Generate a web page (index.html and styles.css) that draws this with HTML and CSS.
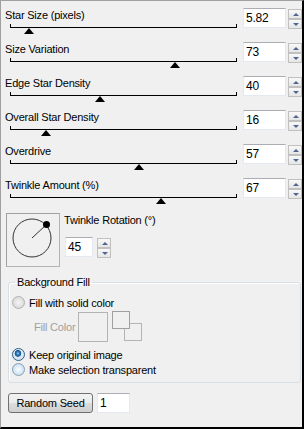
FILE: index.html
```html
<!DOCTYPE html>
<html lang="en">
<head>
    <meta charset="UTF-8">
    <title>Star Effect</title>
    <link rel="stylesheet" href="styles.css">
</head>
<body>
<div class="panel">
    <div class="slider-row">
        <div class="slider-col">
            <div class="slider-label">Star Size (pixels)</div>
            <div class="track"><span class="thumb" style="left: 13px"></span></div>
        </div>
        <div class="spin">
            <div class="spin-input">5.82</div>
            <div class="spin-buttons"><span class="spin-btn up"></span><span class="spin-btn down"></span></div>
        </div>
    </div>
    <div class="slider-row">
        <div class="slider-col">
            <div class="slider-label">Size Variation</div>
            <div class="track"><span class="thumb" style="left: 159px"></span></div>
        </div>
        <div class="spin">
            <div class="spin-input">73</div>
            <div class="spin-buttons"><span class="spin-btn up"></span><span class="spin-btn down"></span></div>
        </div>
    </div>
    <div class="slider-row">
        <div class="slider-col">
            <div class="slider-label">Edge Star Density</div>
            <div class="track"><span class="thumb" style="left: 84px"></span></div>
        </div>
        <div class="spin">
            <div class="spin-input">40</div>
            <div class="spin-buttons"><span class="spin-btn up"></span><span class="spin-btn down"></span></div>
        </div>
    </div>
    <div class="slider-row">
        <div class="slider-col">
            <div class="slider-label">Overall Star Density</div>
            <div class="track"><span class="thumb" style="left: 30px"></span></div>
        </div>
        <div class="spin">
            <div class="spin-input">16</div>
            <div class="spin-buttons"><span class="spin-btn up"></span><span class="spin-btn down"></span></div>
        </div>
    </div>
    <div class="slider-row">
        <div class="slider-col">
            <div class="slider-label">Overdrive</div>
            <div class="track"><span class="thumb" style="left: 123px"></span></div>
        </div>
        <div class="spin">
            <div class="spin-input">57</div>
            <div class="spin-buttons"><span class="spin-btn up"></span><span class="spin-btn down"></span></div>
        </div>
    </div>
    <div class="slider-row">
        <div class="slider-col">
            <div class="slider-label">Twinkle Amount (%)</div>
            <div class="track"><span class="thumb" style="left: 145px"></span></div>
        </div>
        <div class="spin">
            <div class="spin-input">67</div>
            <div class="spin-buttons"><span class="spin-btn up"></span><span class="spin-btn down"></span></div>
        </div>
    </div>

    <div class="dial-row">
        <div class="dial">
            <svg width="52" height="52" viewBox="0 0 52 52">
                <circle cx="25" cy="24" r="19" fill="none" stroke="#333" stroke-width="1"/>
                <line x1="25" y1="24" x2="39" y2="11" stroke="#333" stroke-width="1"/>
                <circle cx="39.5" cy="10.5" r="3.5" fill="#000"/>
            </svg>
        </div>
        <div class="dial-side">
            <div class="dial-label">Twinkle Rotation (°)</div>
            <div class="spin small">
                <div class="spin-input">45</div>
                <div class="spin-buttons"><span class="spin-btn up"></span><span class="spin-btn down"></span></div>
            </div>
        </div>
    </div>

    <fieldset class="group">
        <legend>Background Fill</legend>
        <div class="radio-row">
            <span class="radio disabled"></span>
            <span>Fill with solid color</span>
        </div>
        <div class="fill-row">
            <span class="fill-label">Fill Color</span>
            <span class="swatch"></span>
            <span class="swatch-pair">
                <span class="swatch-small"></span>
                <span class="swatch-small back"></span>
            </span>
        </div>
        <div class="radio-row">
            <span class="radio checked"></span>
            <span>Keep original image</span>
        </div>
        <div class="radio-row">
            <span class="radio"></span>
            <span>Make selection transparent</span>
        </div>
    </fieldset>

    <div class="seed-row">
        <button class="btn">Random Seed</button>
        <div class="seed-input">1</div>
    </div>
</div>
</body>
</html>
```

FILE: styles.css
```css
* {
    box-sizing: border-box;
}
body {
    margin: 0;
    font-family: "Liberation Sans", Arial, sans-serif;
    font-size: 11px;
    letter-spacing: -0.2px;
    color: #000;
    background-color: #f0f0f0;
}
.panel {
    width: 304px;
    height: 429px;
    background-color: #f0f0f0;
    border-top: 1px solid #a0a0a0;
    border-left: 1px solid #a0a0a0;
    border-right: 2px solid #000;
    border-bottom: 2px solid #000;
    padding: 7px 0 0 4px;
}
.slider-row {
    display: flex;
    height: 34px;
}
.slider-col {
    flex: 1;
}
.slider-label {
    line-height: 13px;
    margin-top: 1px;
}
.track {
    position: relative;
    margin: 2px 0 0 5px;
    width: 227px;
    height: 4px;
    border: 1px solid #000;
    border-top: none;
}
.thumb {
    position: absolute;
    top: 4px;
    width: 0;
    height: 0;
    border-left: 5px solid transparent;
    border-right: 5px solid transparent;
    border-bottom: 6px solid #000;
}
.spin {
    display: flex;
}
.spin-input {
    width: 43px;
    height: 20px;
    border: 1px solid #e3e9ef;
    border-top-color: #abadb3;
    background-color: #fff;
    padding-left: 2px;
    line-height: 18px;
    font-size: 12px;
}
.spin-buttons {
    display: flex;
    flex-direction: column;
    margin: 1px 0 0 2px;
}
.spin-btn {
    position: relative;
    width: 14px;
    height: 10px;
    border: 1px solid #c0c0c0;
    background: linear-gradient(#f8f8f8, #e6e6e6);
}
.spin-btn::after {
    content: "";
    position: absolute;
    left: 4px;
    top: 3px;
    border-left: 3px solid transparent;
    border-right: 3px solid transparent;
}
.spin-btn.up::after {
    border-bottom: 3px solid #4d6590;
}
.spin-btn.down::after {
    border-top: 3px solid #4d6590;
}
.dial-row {
    display: flex;
    margin-top: 1px;
}
.dial {
    width: 54px;
    height: 54px;
    margin-left: 1px;
    border: 1px solid #a0a0a0;
    border-right-color: #b4b4b4;
    border-bottom-color: #b4b4b4;
}
.dial svg {
    display: block;
}
.dial-side {
    margin-left: 4px;
}
.dial-label {
    line-height: 13px;
    margin-top: 1px;
}
.spin.small {
    margin: 10px 0 0 1px;
}
.spin.small .spin-input {
    width: 28px;
}
.spin.small .spin-buttons {
    margin-left: 4px;
}
.group {
    margin: 9px 1px 0 3px;
    padding: 0 0 5px 3px;
    border: 1px solid #d5dfe5;
    border-radius: 3px;
    box-shadow: inset 1px 1px 0 #fff;
    min-width: 0;
}
.group legend {
    margin-left: 3px;
    padding: 0 2px;
    line-height: 13px;
}
.radio-row {
    display: flex;
    align-items: center;
    gap: 4px;
    height: 15px;
}
.group .radio-row:first-of-type {
    margin-top: 6px;
}
.radio {
    width: 13px;
    height: 13px;
    border-radius: 50%;
    border: 1px solid #8a9fb3;
    background: radial-gradient(circle at 50% 50%, #fff 0, #e0eefa 40%, #b3d3ee 100%);
}
.radio.disabled {
    border-color: #b1b1b1;
    background: radial-gradient(circle at 50% 50%, #f4f4f4 0, #e3e3e3 50%, #cfcfcf 100%);
}
.radio.checked {
    border-color: #2c628b;
    background: radial-gradient(circle at 45% 40%, #8fd0f4 0, #2f7fbf 1.5px, #1a4f83 3px, #dceaf6 3.6px, #c9dff2 100%);
}
.fill-row {
    display: flex;
    align-items: center;
    height: 31px;
    margin: 1px 0 5px;
}
.fill-label {
    color: #a0a0a0;
    margin-left: 22px;
    width: 44px;
}
.swatch {
    width: 30px;
    height: 30px;
    border: 1px solid #b4b4b4;
}
.swatch-pair {
    position: relative;
    width: 30px;
    height: 31px;
    margin-left: 4px;
}
.swatch-small {
    position: absolute;
    left: 0;
    top: 0;
    width: 18px;
    height: 18px;
    border: 1px solid #a0a0a0;
    background-color: #f0f0f0;
    z-index: 1;
}
.swatch-small.back {
    left: 12px;
    top: 12px;
    z-index: 0;
    border-color: #b4b4b4;
}
.seed-row {
    display: flex;
    gap: 4px;
    margin: 10px 0 0 3px;
}
.btn {
    width: 85px;
    height: 20px;
    border: 1px solid #707070;
    border-radius: 3px;
    background: linear-gradient(#f2f2f2 0%, #ebebeb 50%, #dddddd 50%, #cfcfcf 100%);
    font-family: "Liberation Sans", Arial, sans-serif;
    font-size: 11px;
    letter-spacing: -0.2px;
    color: #000;
    padding: 0;
}
.seed-input {
    width: 33px;
    height: 20px;
    border: 1px solid #e3e9ef;
    border-top-color: #abadb3;
    background-color: #fff;
    padding-left: 2px;
    line-height: 18px;
    font-size: 12px;
}
```
